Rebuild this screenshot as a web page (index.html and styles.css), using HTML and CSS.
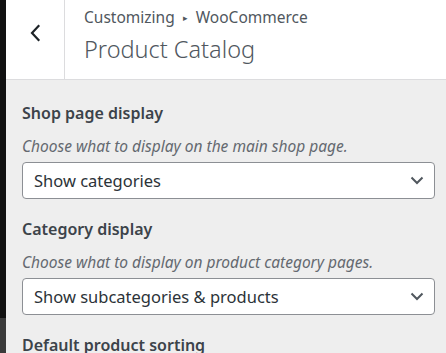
FILE: index.html
```html
<!DOCTYPE html>
<html>
<head>
  <meta charset="UTF-8">
  <title>Product Catalog</title>
  <link rel="stylesheet" href="styles.css">
</head>
<body>
  <div class="frame">
    <!-- dark edge of the preview behind the sidebar -->
    <div class="edge">
      <div class="edge-top"></div>
      <div class="edge-bottom"></div>
    </div>

    <div class="sidebar">
      <div class="panel-header">
        <button class="back-button" aria-label="Back">
          <svg width="12" height="18" viewBox="0 0 12 18" fill="none" stroke="#1d2327" stroke-width="2.2" stroke-linecap="square">
            <polyline points="9.5 2 3 9 9.5 16"></polyline>
          </svg>
        </button>
        <div class="panel-title">
          <div class="breadcrumb">Customizing <span class="sep">&#9656;</span> WooCommerce</div>
          <h2>Product Catalog</h2>
        </div>
      </div>

      <div class="controls">
        <div class="control">
          <div class="control-label">Shop page display</div>
          <div class="control-desc">Choose what to display on the main shop page.</div>
          <div class="select-box">
            <span>Show categories</span>
            <svg width="14" height="9" viewBox="0 0 14 9" fill="none" stroke="#50575e" stroke-width="2">
              <polyline points="1.5 1.5 7 7 12.5 1.5"></polyline>
            </svg>
          </div>
        </div>

        <div class="control">
          <div class="control-label">Category display</div>
          <div class="control-desc">Choose what to display on product category pages.</div>
          <div class="select-box">
            <span>Show subcategories &amp; products</span>
            <svg width="14" height="9" viewBox="0 0 14 9" fill="none" stroke="#50575e" stroke-width="2">
              <polyline points="1.5 1.5 7 7 12.5 1.5"></polyline>
            </svg>
          </div>
        </div>

        <div class="control">
          <div class="control-label">Default product sorting</div>
        </div>
      </div>
    </div>
  </div>
</body>
</html>
```

FILE: styles.css
```css
html, body {
  margin: 0;
  padding: 0;
  height: 100%;
  overflow: hidden;
}
body {
  font-family: "Noto Sans", "Open Sans", sans-serif;
  background-color: #eeeeee;
  color: #2c3338;
}
.frame {
  display: flex;
  height: 100%;
}
.edge {
  width: 6px;
  flex-shrink: 0;
  display: flex;
  flex-direction: column;
}
.edge-top {
  height: 318px;
  background-color: #111111;
}
.edge-bottom {
  flex: 1;
  background-color: #3a3a3a;
}
.sidebar {
  flex: 1;
  min-width: 0;
}
.panel-header {
  display: flex;
  height: 79px;
  background-color: #ffffff;
  border-bottom: 1px solid #dcdcde;
}
.back-button {
  width: 59px;
  flex-shrink: 0;
  padding: 0 0 14px;
  border: none;
  border-right: 1px solid #dcdcde;
  background: none;
  display: flex;
  align-items: center;
  justify-content: center;
}
.panel-title {
  padding: 7px 0 0 19px;
  color: #50575e;
}
.breadcrumb {
  font-size: 15.5px;
  line-height: 20px;
}
.breadcrumb .sep {
  font-size: 9px;
  vertical-align: 2px;
  margin: 0 4px;
}
.panel-title h2 {
  margin: 6px 0 0;
  font-size: 23.5px;
  font-weight: 300;
  line-height: 30px;
}
.controls {
  padding: 22px 11px 0 16px;
}
.control {
  margin-bottom: 19px;
}
.control-label {
  font-size: 16px;
  font-weight: 600;
  line-height: 22px;
  color: #3c434a;
  margin-bottom: 11px;
}
.control-desc {
  font-size: 15.5px;
  font-style: italic;
  line-height: 22px;
  color: #646970;
  margin-bottom: 5px;
}
.select-box {
  box-sizing: border-box;
  height: 37px;
  display: flex;
  align-items: center;
  justify-content: space-between;
  padding: 0 10px 0 11px;
  background-color: #ffffff;
  border: 1px solid #8c8f94;
  border-radius: 4px;
  font-size: 16.5px;
}
```
